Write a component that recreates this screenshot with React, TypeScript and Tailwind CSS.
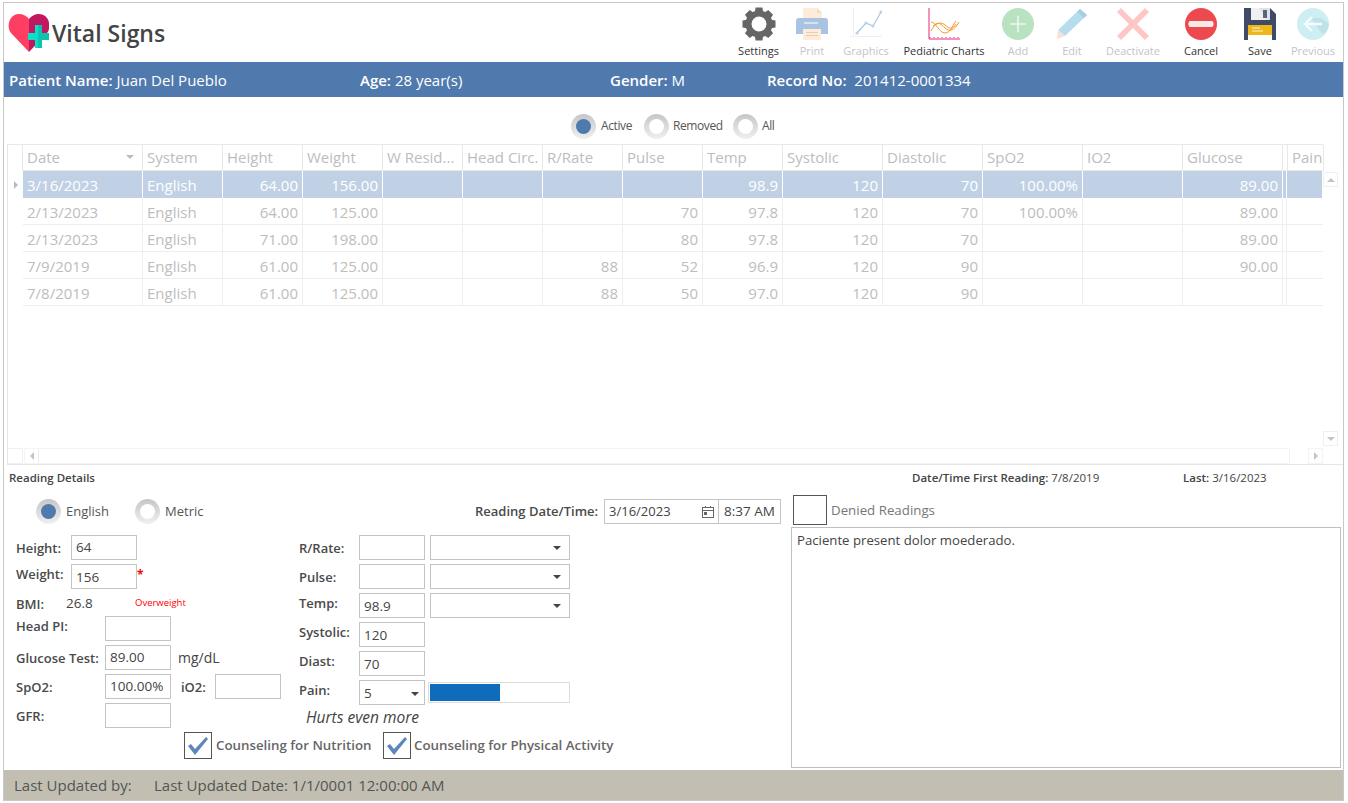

import React from "react";

const Gear = () => (
  <svg width="36" height="36" viewBox="0 0 36 36">
    {[0, 45, 90, 135, 180, 225, 270, 315].map((a) => (
      <path key={a} d="M14.6 1.5h6.8l1 6h-8.8z" fill="#666" transform={`rotate(${a} 18 18)`} />
    ))}
    <circle cx="18" cy="18" r="10.5" fill="none" stroke="#666" strokeWidth="6" />
  </svg>
);
const Printer = () => (
  <svg width="34" height="34" viewBox="0 0 34 34">
    <path d="M8 1h14l5 5v8H8z" fill="#fdecd9" />
    <path d="M22 1l5 5h-5z" fill="#f5dcc4" />
    <path d="M4 11h26a3 3 0 0 1 3 3v13H1V14a3 3 0 0 1 3-3z" fill="#a9c3e2" />
    <rect x="9" y="15" width="14" height="2" fill="#d4e2f2" />
    <path d="M8 22h18v11H8z" fill="#fdecd9" />
    <rect x="11" y="25" width="12" height="1" fill="#e8cfb0" />
    <rect x="11" y="28" width="12" height="1" fill="#e8cfb0" />
  </svg>
);
const Graphic = () => (
  <svg width="32" height="32" viewBox="0 0 32 32">
    <path d="M3.5 0v29M0 28.500h32" stroke="#eeeeee" strokeWidth="1" fill="none" />
    <path d="M7 25l9-10 7 3 8-14" stroke="#a9c6e4" strokeWidth="1.200" fill="none" />
    {[[7, 25], [16, 15], [23, 18], [31, 4]].map(([x, y]) => (
      <circle key={x} cx={x} cy={y} r="1.600" fill="#b6d2ee" />
    ))}
  </svg>
);
const Pediatric = () => (
  <svg width="32" height="32" viewBox="0 0 32 32">
    <path d="M1 0v31h31" stroke="#e9267f" strokeWidth="1" fill="none" />
    <path d="M2 30v-1M6 30v-1M10 30v-1M14 30v-1M18 30v-1M22 30v-1M26 30v-1M30 30v-1" stroke="#e9267f" strokeWidth="1" />
    <path d="M3 14c5 0 8 11 14 11s8-9 11-12" stroke="#f59a23" strokeWidth="1" fill="none" />
    <path d="M3 23c4-8 9-10 14-6s7 5 11-1" stroke="#f59a23" strokeWidth="1" fill="none" />
    <path d="M5 18c5-5 8-2 12 2s9 3 14-6" stroke="#f59a23" strokeWidth="1" fill="none" />
  </svg>
);
const Add = () => (
  <svg width="32" height="32" viewBox="0 0 32 32">
    <circle cx="16" cy="16" r="16" fill="#b9e2c0" />
    <path d="M16 8v16M8 16h16" stroke="#eef8f0" strokeWidth="1.600" />
  </svg>
);
const Pencil = () => (
  <svg width="32" height="32" viewBox="0 0 32 32">
    <path d="M24 1l7 6L9 28 2 22z" fill="#b7dcec" />
    <path d="M24 1l7 6-3 3-7-6z" fill="#a5d0e4" />
    <path d="M2 22l7 6-8 3z" fill="#f6dfd8" />
  </svg>
);
const XMark = () => (
  <svg width="32" height="32" viewBox="0 0 32 32">
    <path d="M4 0l12 12L28 0l4 4-12 12 12 12-4 4-12-12L4 32l-4-4 12-12L0 4z" fill="#ffc6c6" />
  </svg>
);
const Cancel = () => (
  <svg width="32" height="32" viewBox="0 0 32 32">
    <circle cx="16" cy="16" r="16" fill="#ec4a4f" />
    <rect x="3.500" y="13" width="25" height="6" rx="2" fill="#f9eaea" />
  </svg>
);
const Floppy = () => (
  <svg width="32" height="32" viewBox="0 0 32 32">
    <path d="M0 0h26l6 6v26H0z" fill="#3e4a66" />
    <path d="M7 0h19v12H7z" fill="#dfe3e6" />
    <path d="M7 0h8l8 12H7z" fill="#eef0f2" />
    <rect x="19" y="2" width="4" height="8" fill="#5b6579" />
    <rect x="4" y="17" width="24" height="10" fill="#edb71c" />
    <path d="M8 20h8M8 23h11" stroke="#fdf3d0" strokeWidth="1" />
    <rect x="4" y="27" width="24" height="5" fill="#fff" />
  </svg>
);
const Previous = () => (
  <svg width="32" height="32" viewBox="0 0 32 32">
    <circle cx="16" cy="16" r="16" fill="#cdeef2" />
    <path d="M14 10l10 14 2 2a16 16 0 0 0 6-10l-8-6z" fill="#bfe2e8" />
    <path d="M15 9l-7 7 7 7M8 16h17" stroke="#f4fcfd" strokeWidth="2.400" fill="none" />
  </svg>
);
const Logo = () => (
  <svg width="41" height="40" viewBox="0 0 41 40" className="shrink-0">
    <path d="M21 39L3 20C-2 14 1 1 11 1c4 0 8 2 10 5z" fill="#ff3e64" />
    <path d="M21 39l18-19c5-6 2-19-8-19-4 0-8 2-10 5z" fill="#c2185f" />
    <path d="M27 12h7v8h7v7h-7v8h-7v-8h-7v-7h7z" fill="#0be0c6" />
    <path d="M30 12h4v8h7v7h-7v8h-4z" fill="#0cc4ae" />
  </svg>
);

const tools: { label: string; w: string; off: boolean; icon: React.ReactNode }[] = [
  { label: "Settings", w: "w-[57px]", off: false, icon: <Gear /> },
  { label: "Print", w: "w-[50px]", off: true, icon: <Printer /> },
  { label: "Graphics", w: "w-[58px]", off: true, icon: <Graphic /> },
  { label: "Pediatric Charts", w: "w-[98px]", off: false, icon: <Pediatric /> },
  { label: "Add", w: "w-[50px]", off: true, icon: <Add /> },
  { label: "Edit", w: "w-[58px]", off: true, icon: <Pencil /> },
  { label: "Deactivate", w: "w-[64px]", off: true, icon: <XMark /> },
  { label: "Cancel", w: "w-[72px]", off: false, icon: <Cancel /> },
  { label: "Save", w: "w-[46px]", off: false, icon: <Floppy /> },
  { label: "Previous", w: "w-[60px]", off: true, icon: <Previous /> },
];

const cols: { name: string; w: string; right?: boolean }[] = [
  { name: "Date", w: "w-[120px]" },
  { name: "System", w: "w-[80px]" },
  { name: "Height", w: "w-[80px]", right: true },
  { name: "Weight", w: "w-[80px]", right: true },
  { name: "W Resid...", w: "w-[80px]", right: true },
  { name: "Head Circ.", w: "w-[80px]", right: true },
  { name: "R/Rate", w: "w-[80px]", right: true },
  { name: "Pulse", w: "w-[80px]", right: true },
  { name: "Temp", w: "w-[80px]", right: true },
  { name: "Systolic", w: "w-[100px]", right: true },
  { name: "Diastolic", w: "w-[100px]", right: true },
  { name: "SpO2", w: "w-[100px]", right: true },
  { name: "IO2", w: "w-[100px]", right: true },
  { name: "Glucose", w: "w-[100px]", right: true },
  { name: "", w: "w-[4px]" },
  { name: "Pain", w: "w-[36px]" },
];

const rows: string[][] = [
  ["3/16/2023", "English", "64.00", "156.00", "", "", "", "", "98.9", "120", "70", "100.00%", "", "89.00", "", ""],
  ["2/13/2023", "English", "64.00", "125.00", "", "", "", "70", "97.8", "120", "70", "100.00%", "", "89.00", "", ""],
  ["2/13/2023", "English", "71.00", "198.00", "", "", "", "80", "97.8", "120", "70", "", "", "89.00", "", ""],
  ["7/9/2019", "English", "61.00", "125.00", "", "", "88", "52", "96.9", "120", "90", "", "", "90.00", "", ""],
  ["7/8/2019", "English", "61.00", "125.00", "", "", "88", "50", "97.0", "120", "90", "", "", "", "", ""],
];

const Radio = ({ on }: { on?: boolean }) => (
  <span className="w-[25px] h-[25px] rounded-full bg-gradient-to-b from-[#c6c6c6] to-[#f0f0f0] flex items-center justify-center shrink-0">
    <span className={on ? "w-[15px] h-[15px] rounded-full bg-[#507aae]" : "w-[15px] h-[15px] rounded-full bg-white"} />
  </span>
);

const Box = ({ v, w = "w-[66px]", low }: { v?: string; w?: string; low?: boolean }) => (
  <div className={`${w} h-[25px] border border-[#c4c4c4] bg-white pl-[4px] flex items-center text-[13.5px] text-[#444] shrink-0 ${low ? "pt-[2px]" : ""}`}>{v}</div>
);

const Caret = () => <span className="w-0 h-0 border-x-[4px] border-x-transparent border-t-[4px] border-t-[#444]" />;

const Select = () => (
  <div className="w-[140px] h-[25px] border border-[#c4c4c4] flex items-center justify-end pr-[8px] ml-[5px]">
    <Caret />
  </div>
);

const Label = ({ t, w, up, flat }: { t: string; w: string; up?: boolean; flat?: boolean }) => (
  <span className={`${w} ${flat ? "mt-[1px]" : up ? "mt-[-4px]" : "mt-[2px]"} font-semibold text-[13px] text-[#4a4a4a] shrink-0 whitespace-nowrap`}>{t}</span>
);

const Check = () => (
  <span className="w-[28px] h-[27px] border border-[#555] flex items-center justify-center shrink-0">
    <svg width="22" height="20" viewBox="0 0 22 20">
      <path d="M1 10l3-2 4 5L19 1l2 2L8 19z" fill="#5f86bb" />
    </svg>
  </span>
);

export default function App() {
  return (
    <div className="w-[1348px] h-[803px] pt-[2px] pl-[3px] bg-white font-['Open_Sans',sans-serif] overflow-hidden">
      <div className="w-[1341px] h-[799px] border border-[#c8c8c8] flex flex-col">
        {/* Title bar */}
        <header className="h-[59px] flex shrink-0 items-start justify-between">
          <div className="flex items-center pl-[4px] pt-[10px]">
            <Logo />
            <h1 className="text-[23px] font-semibold text-[#444] ml-[3px] leading-[36px]">Vital Signs</h1>
          </div>
          <div className="flex pt-[4px]">
            {tools.map((t) => (
              <div key={t.label} className={`${t.w} flex flex-col items-center`}>
                <div className="h-[34px] flex items-center justify-center">{t.icon}</div>
                <span className={`text-[11px] mt-[2px] whitespace-nowrap leading-[16px] ${t.off ? "text-[#c4c4c4]" : "text-[#333]"}`}>{t.label}</span>
              </div>
            ))}
          </div>
        </header>

        {/* Patient bar */}
        <div className="h-[35px] bg-[#507aae] flex items-center text-white text-[15px] shrink-0 pl-[5px] pt-[1px] whitespace-nowrap">
          <span className="w-[351px]"><b className="font-semibold">Patient Name:</b> Juan Del Pueblo</span>
          <span className="w-[250px]"><b className="font-semibold">Age:</b> 28 year(s)</span>
          <span className="w-[157px]"><b className="font-semibold">Gender:</b> M</span>
          <span><b className="font-semibold">Record No:</b>&nbsp; 201412-0001334</span>
        </div>

        {/* Status filter */}
        <div className="h-[47px] flex items-center pl-[567px] pt-[11px] text-[12px] text-[#555] shrink-0 tracking-[-0.4px]">
          <Radio on />
          <span className="ml-[5px] w-[43px]">Active</span>
          <Radio />
          <span className="ml-[4px] w-[60px]">Removed</span>
          <Radio />
          <span className="ml-[4px]">All</span>
        </div>

        {/* Grid */}
        <section className="h-[321px] shrink-0 ml-[3px] flex flex-col border-b border-l border-[#e6e6e6]">
          <div className="flex-1 flex min-h-0">
            <div className="w-[1315px] flex flex-col text-[15px] text-[#bdbdbd]">
              <div className="flex h-[27px] border-t border-[#e8e8e8]">
                <div className="w-[15px] shrink-0 border-r border-[#e8e8e8]" />
                {cols.map((c, i) => (
                  <div key={i} className={`${c.w} shrink-0 relative border-r border-b border-[#e8e8e8] pl-[4px] flex items-center whitespace-nowrap overflow-hidden`}>
                    {c.name}
                    {c.name === "Date" && (
                      <span className="absolute right-[8px] top-[10px] w-0 h-0 border-x-[4px] border-x-transparent border-t-[4px] border-t-[#bbb]" />
                    )}
                  </div>
                ))}
              </div>
              {rows.map((r, ri) => (
                <div key={ri} className="flex h-[27px]">
                  <div className="w-[15px] shrink-0 flex items-center justify-center">
                    {ri === 0 && <span className="w-0 h-0 border-y-[4px] border-y-transparent border-l-[4px] border-l-[#bbb]" />}
                  </div>
                  {r.map((v, ci) => (
                    <div
                      key={ci}
                      className={`${cols[ci].w} shrink-0 flex items-center whitespace-nowrap overflow-hidden pt-[2px] ${ci === 14 ? "" : "px-[4px]"} ${cols[ci].right ? "justify-end" : ""} ${ri === 0 ? "bg-[#c0d1e6] text-white border-r border-white" : ci === 15 ? "border-b border-[#eeeeee]" : "border-r border-b border-[#eeeeee]"}`}
                    >
                      {v}
                    </div>
                  ))}
                </div>
              ))}
            </div>
            <div className="w-[15px] flex flex-col justify-between pt-[28px] pb-[2px]">
              <div className="h-[15px] border border-[#f0f0f0] flex items-center justify-center">
                <span className="w-0 h-0 border-x-[4px] border-x-transparent border-b-[4px] border-b-[#c4c4c4]" />
              </div>
              <div className="h-[15px] border border-[#f0f0f0] flex items-center justify-center">
                <span className="w-0 h-0 border-x-[4px] border-x-transparent border-t-[4px] border-t-[#c4c4c4]" />
              </div>
            </div>
          </div>
          <div className="h-[16px] flex shrink-0">
            <div className="w-[15px] border border-l-0 border-[#f0f0f0]" />
            <div className="w-[1266px] ml-[1px] border border-[#f4f4f4] flex items-center">
              <span className="w-[14px] h-full border-r border-[#f0f0f0] flex items-center justify-center">
                <span className="w-0 h-0 border-y-[4px] border-y-transparent border-r-[4px] border-r-[#c4c4c4]" />
              </span>
            </div>
            <div className="w-[15px] ml-[18px] border border-[#f4f4f4] flex items-center justify-center">
              <span className="w-0 h-0 border-y-[4px] border-y-transparent border-l-[4px] border-l-[#c4c4c4]" />
            </div>
          </div>
        </section>

        {/* Details heading */}
        <div className="h-[25px] shrink-0 flex items-center text-[11.5px] text-[#444] pl-[5px]">
          <b className="font-semibold w-[903px]">Reading Details</b>
          <span className="w-[271px]"><b className="font-semibold">Date/Time First Reading:</b> 7/8/2019</span>
          <span><b className="font-semibold">Last:</b> 3/16/2023</span>
        </div>

        {/* Details */}
        <div className="flex-1 flex min-h-0">
          <div className="w-[787px] shrink-0 flex flex-col">
            <div className="h-[45px] flex items-center pb-[2px] text-[13px] text-[#555] shrink-0">
              <span className="ml-[32px]"><Radio on /></span>
              <span className="ml-[5px] w-[69px]">English</span>
              <Radio />
              <span className="ml-[5px] w-[310px]">Metric</span>
              <span className="font-semibold text-[#4a4a4a] w-[129px] whitespace-nowrap">Reading Date/Time:</span>
              <div className="w-[115px] h-[25px] border border-[#c4c4c4] flex items-center justify-between pl-[4px] pr-[3px] text-[#444]">
                3/16/2023
                <svg width="14" height="14" viewBox="0 0 14 14" fill="none" stroke="#666" strokeWidth="1">
                  <rect x="1.500" y="2.500" width="11" height="10" />
                  <path d="M1.500 5.500h11M4.500 1v2M9.500 1v2" />
                  <rect x="3.500" y="7.500" width="2" height="2" fill="#666" />
                </svg>
              </div>
              <div className="w-[62px] h-[25px] border border-l-0 border-[#c4c4c4] flex items-center justify-center text-[13.5px] text-[#444]">8:37 AM</div>
            </div>

            <div className="flex">
              <div className="ml-[12px] w-[283px] shrink-0 flex flex-col">
                <div className="h-[25px] flex items-center mb-[4px]"><Label t="Height:" w="w-[55px]" /><Box v="64" /></div>
                <div className="h-[25px] flex items-center">
                  <Label t="Weight:" w="w-[55px]" up /><Box v="156" low />
                  <span className="text-[#f00] text-[12px] font-bold mb-[4px]">*</span>
                </div>
                <div className="h-[27px] flex items-center pt-[2px]">
                  <Label t="BMI:" w="w-[50px]" />
                  <span className="w-[69px] text-[13.5px] text-[#444]">26.8</span>
                  <span className="text-[9.5px] text-[#f00]">Overweight</span>
                </div>
                <div className="h-[25px] flex items-start mb-[4px]"><Label t="Head PI:" w="w-[89px]" flat /><Box /></div>
                <div className="h-[25px] flex items-center mb-[4px]">
                  <Label t="Glucose Test:" w="w-[89px]" /><Box v="89.00" />
                  <span className="ml-[7px] text-[14px] text-[#444]">mg/dL</span>
                </div>
                <div className="h-[25px] flex items-center mb-[4px]">
                  <Label t="SpO2:" w="w-[89px]" /><Box v="100.00%" />
                  <Label t="iO2:" w="w-[34px] ml-[10px]" /><Box />
                </div>
                <div className="h-[25px] flex items-center"><Label t="GFR:" w="w-[89px]" /><Box /></div>
              </div>
              <div className="flex flex-col">
                <div className="h-[25px] flex items-center mb-[4px]"><Label t="R/Rate:" w="w-[60px]" /><Box /><Select /></div>
                <div className="h-[25px] flex items-center mb-[4px]"><Label t="Pulse:" w="w-[60px]" /><Box /><Select /></div>
                <div className="h-[25px] flex items-center mb-[4px]"><Label t="Temp:" w="w-[60px]" up /><Box v="98.9" low /><Select /></div>
                <div className="h-[25px] flex items-center mb-[4px]"><Label t="Systolic:" w="w-[60px]" up /><Box v="120" low /></div>
                <div className="h-[25px] flex items-center mb-[4px]"><Label t="Diast:" w="w-[60px]" up /><Box v="70" low /></div>
                <div className="h-[25px] flex items-center">
                  <Label t="Pain:" w="w-[60px]" up />
                  <div className="w-[66px] h-[25px] border border-[#c4c4c4] flex items-center justify-between pl-[4px] pr-[5px] pt-[2px] text-[13.5px] text-[#444]">5<Caret /></div>
                  <div className="w-[142px] h-[21px] ml-[3px] border border-[#dddddd] bg-white p-[1px]">
                    <div className="w-[70px] h-full bg-[#0f6cbd]" />
                  </div>
                </div>
                <div className="h-[26px] flex items-center ml-[7px] italic text-[15.5px] text-[#444]">Hurts even more</div>
              </div>
            </div>

            <div className="flex items-center ml-[180px] mt-[1px] text-[13.3px] font-semibold text-[#666]">
              <Check />
              <span className="ml-[4px] w-[167px] whitespace-nowrap">Counseling for Nutrition</span>
              <Check />
              <span className="ml-[3px] whitespace-nowrap">Counseling for Physical Activity</span>
            </div>
          </div>

          <div className="w-[550px] flex flex-col">
            <div className="h-[37px] flex items-start pl-[2px] shrink-0">
              <span className="w-[34px] h-[30px] border border-[#555] mt-[5px]" />
              <span className="ml-[4px] mt-[11px] text-[13.3px] text-[#777]">Denied Readings</span>
            </div>
            <div className="w-[550px] h-[241px] border border-[#c0c0c0] pl-[5px] pt-[3px] text-[13.2px] text-[#444]">
              Paciente present dolor moederado.
            </div>
          </div>
        </div>

        {/* Footer */}
        <footer className="h-[30px] bg-[#c2bfb2] flex items-center pl-[10px] text-[15px] text-[#555] shrink-0">
          <span className="w-[140px]">Last Updated by:</span>
          <span>Last Updated Date: 1/1/0001 12:00:00 AM</span>
        </footer>
      </div>
    </div>
  );
}
